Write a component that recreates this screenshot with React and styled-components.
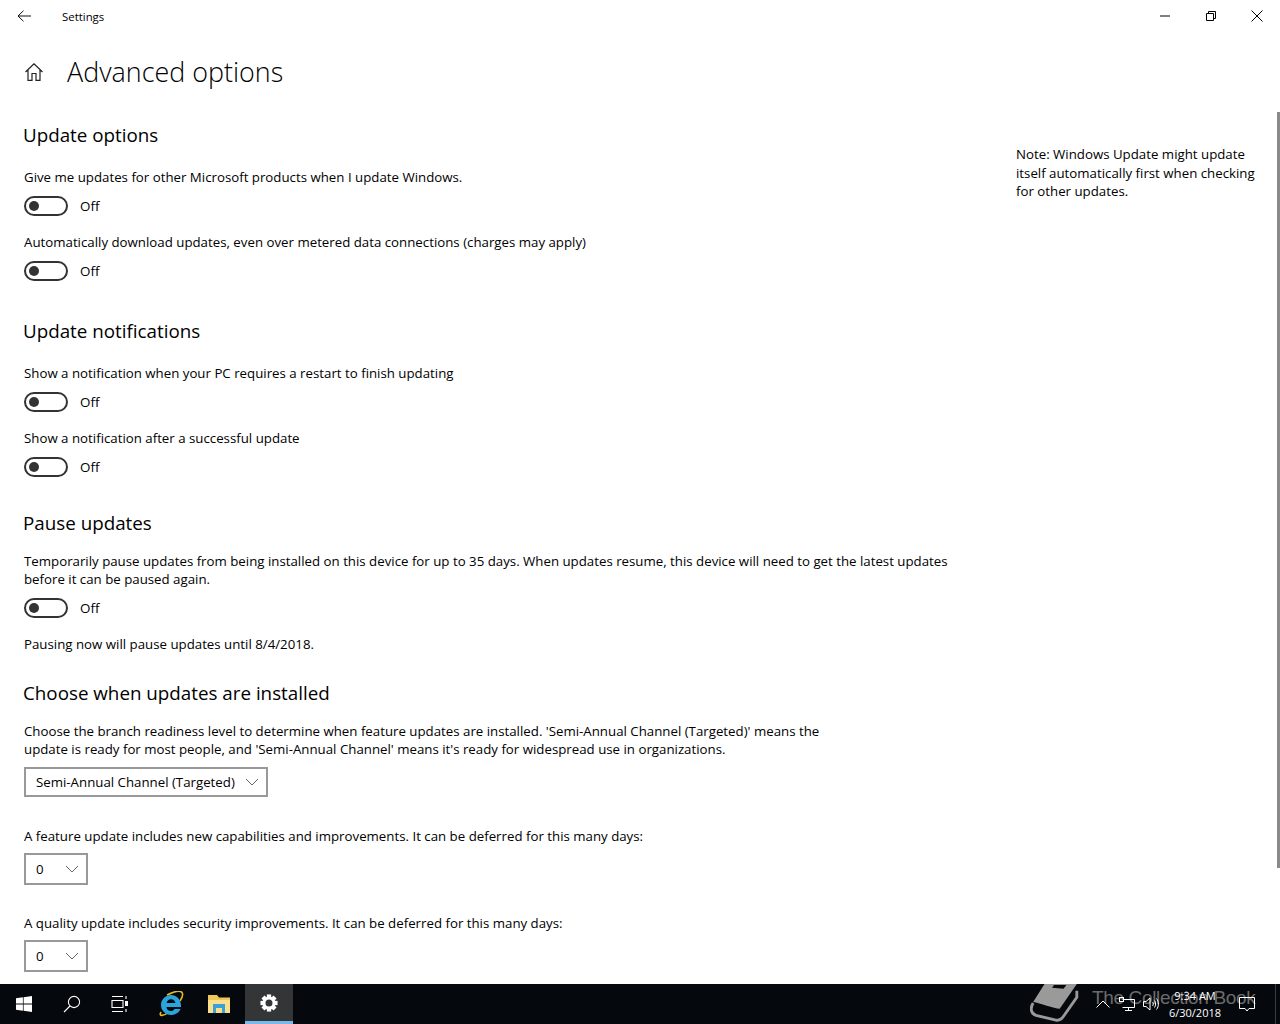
import React from 'react'
import styled, { createGlobalStyle } from 'styled-components'

const Global = createGlobalStyle`
  html, body { margin: 0; padding: 0; background: #fff; }
  body { font-family: "Open Sans", "Liberation Sans", sans-serif; color: #000; }
`

const Page = styled.div`
  position: relative;
  width: 1280px;
  height: 1024px;
  overflow: hidden;
  display: flex;
  flex-direction: column;
`

const TitleBar = styled.header`
  height: 32px;
  flex: none;
  display: flex;
  align-items: center;
`

const BackButton = styled.div`
  width: 48px;
  height: 32px;
  display: flex;
  align-items: center;
  justify-content: center;
`

const AppName = styled.div`
  margin-left: 14px;
  font-size: 11.4px;
  flex: 1;
`

const WindowButton = styled.div`
  width: 46px;
  height: 32px;
  display: flex;
  align-items: center;
  justify-content: center;
`

const Main = styled.main`
  flex: 1;
  display: flex;
  min-height: 0;
  overflow: hidden;
`

const Content = styled.div`
  width: 1016px;
  flex: none;
  padding: 20px 0 0 24px;
  box-sizing: border-box;
`

const TitleRow = styled.div`
  height: 40px;
  display: flex;
  align-items: center;
  gap: 24px;
`

const HomeIcon = styled.svg`
  width: 18px;
  height: 18px;
  margin-left: 1px;
  flex: none;
`

const Title = styled.h1`
  margin: 0;
  font-size: 26.9px;
  font-weight: 300;
  line-height: 40px;
`

const Heading = styled.h2`
  margin: ${p => p.$top}px 0 0 -1px;
  font-size: 18.8px;
  font-weight: 400;
  line-height: 28px;
`

const Label = styled.p`
  margin: ${p => p.$top}px 0 0;
  font-size: 13.28px;
  line-height: 18px;
  max-width: ${p => p.$max || 940}px;
`

const ToggleRow = styled.div`
  margin-top: 10px;
  height: 20px;
  display: flex;
  align-items: center;
  gap: 12px;
  font-size: 13.4px;
`

const Toggle = styled.div`
  width: 44px;
  height: 20px;
  box-sizing: border-box;
  border: 2px solid #333;
  border-radius: 10px;
  display: flex;
  align-items: center;
  padding-left: 3px;

  &::before {
    content: '';
    width: 10px;
    height: 10px;
    border-radius: 50%;
    background: #333;
  }
`

const Select = styled.div`
  margin-top: ${p => p.$top}px;
  width: ${p => p.$width}px;
  height: ${p => p.$height}px;
  box-sizing: border-box;
  border: 2px solid #999;
  display: flex;
  align-items: center;
  justify-content: space-between;
  padding: 0 6px 0 10px;
  font-size: 13.28px;
`

const Note = styled.aside`
  margin-top: 113px;
  width: 244px;
  font-size: 13.28px;
  line-height: 18.5px;
`

const ScrollThumb = styled.div`
  position: absolute;
  right: 0;
  top: 112px;
  width: 3px;
  height: 756px;
  background: #8a8a8a;
`

const Taskbar = styled.footer`
  position: relative;
  height: 40px;
  flex: none;
  background: #05080d;
  display: flex;
  color: #fff;
`

const TaskButton = styled.div`
  width: 48px;
  height: 40px;
  margin-left: ${p => p.$left || 0}px;
  box-sizing: border-box;
  display: flex;
  align-items: center;
  justify-content: center;
  background: ${p => (p.$active ? '#333537' : 'transparent')};
  border-bottom: ${p => (p.$active ? '3px solid #76b9ed' : 'none')};
`

const Watermark = styled.div`
  position: absolute;
  left: 1030px;
  top: 0;
  display: flex;
  gap: 13px;
  color: #6b6b6b;
  font-family: "Liberation Sans", sans-serif;
  font-size: 19px;
  letter-spacing: -0.35px;
  line-height: 28px;
  white-space: nowrap;
`

const Tray = styled.div`
  position: relative;
  margin: 0 4px 0 auto;
  display: flex;
  align-items: center;
  padding-right: 14px;
  border-right: 1px solid #3a3d40;
`

const TrayIcon = styled.div`
  width: 24px;
  height: 40px;
  display: flex;
  align-items: center;
  justify-content: center;
`

const Clock = styled.div`
  width: 64px;
  text-align: center;
  font-size: 11px;
  line-height: 17px;
`

const ActionButton = styled.div`
  width: 28px;
  margin-left: 6px;
  display: flex;
  justify-content: center;
`

const Switch = () => (
  <ToggleRow>
    <Toggle />
    Off
  </ToggleRow>
)

const Chevron = () => (
  <svg width="16" height="10" viewBox="0 0 16 10">
    <path d="M2 2 L8 8 L14 2" fill="none" stroke="#666" strokeWidth="1" />
  </svg>
)

export default function App() {
  return (
    <Page>
      <Global />
      <TitleBar>
        <BackButton>
          <svg width="14" height="12" viewBox="0 0 14 12">
            <path d="M6.5 .7 L1 6 L6.5 11.3 M1 6 H14" fill="none" stroke="#111" strokeWidth="1" />
          </svg>
        </BackButton>
        <AppName>Settings</AppName>
        <WindowButton>
          <svg width="10" height="2" viewBox="0 0 10 2"><path d="M0 1 H10" stroke="#000" /></svg>
        </WindowButton>
        <WindowButton>
          <svg width="10" height="10" viewBox="0 0 10 10">
            <path d="M.5 2.5 H7.5 V9.5 H.5 Z M2.5 2.5 V.5 H9.5 V7.5 H7.5" fill="none" stroke="#000" />
          </svg>
        </WindowButton>
        <WindowButton>
          <svg width="12" height="12" viewBox="0 0 12 12">
            <path d="M.5 .5 L11.5 11.5 M11.5 .5 L.5 11.5" stroke="#000" />
          </svg>
        </WindowButton>
      </TitleBar>

      <Main>
        <Content>
          <TitleRow>
            <HomeIcon viewBox="0 0 18 18">
              <path
                d="M.5 9 L9 .8 L17.5 9 M3 7 V17.3 H7 V10.5 H11 V17.3 H15 V7"
                fill="none"
                stroke="#222"
                strokeWidth="1.2"
              />
            </HomeIcon>
            <Title>Advanced options</Title>
          </TitleRow>

          <Heading $top={29}>Update options</Heading>
          <Label $top={19}>Give me updates for other Microsoft products when I update Windows.</Label>
          <Switch />
          <Label $top={17}>Automatically download updates, even over metered data connections (charges may apply)</Label>
          <Switch />

          <Heading $top={36}>Update notifications</Heading>
          <Label $top={19}>Show a notification when your PC requires a restart to finish updating</Label>
          <Switch />
          <Label $top={17}>Show a notification after a successful update</Label>
          <Switch />

          <Heading $top={32}>Pause updates</Heading>
          <Label $top={15}>
            Temporarily pause updates from being installed on this device for up to 35 days. When updates resume, this
            device will need to get the latest updates before it can be paused again.
          </Label>
          <Switch />
          <Label $top={17}>Pausing now will pause updates until 8/4/2018.</Label>

          <Heading $top={26}>Choose when updates are installed</Heading>
          <Label $top={15} $max={810}>
            Choose the branch readiness level to determine when feature updates are installed. 'Semi-Annual Channel
            (Targeted)' means the update is ready for most people, and 'Semi-Annual Channel' means it's ready for
            widespread use in organizations.
          </Label>
          <Select $top={9} $width={244} $height={30}>
            Semi-Annual Channel (Targeted)
            <Chevron />
          </Select>
          <Label $top={30}>A feature update includes new capabilities and improvements. It can be deferred for this many days:</Label>
          <Select $top={8} $width={64} $height={32}>
            0
            <Chevron />
          </Select>
          <Label $top={29}>A quality update includes security improvements. It can be deferred for this many days:</Label>
          <Select $top={8} $width={64} $height={32}>
            0
            <Chevron />
          </Select>
        </Content>
        <Note>Note: Windows Update might update itself automatically first when checking for other updates.</Note>
      </Main>
      <ScrollThumb />

      <Taskbar>
        <TaskButton>
          <svg width="16" height="16" viewBox="0 0 16 16" fill="#fff">
            <path d="M0 2.3 L6.9 1.3 V7.6 H0 Z M7.6 1.2 L16 0 V7.6 H7.6 Z M0 8.4 H6.9 V14.7 L0 13.7 Z M7.6 8.4 H16 V16 L7.6 14.8 Z" />
          </svg>
        </TaskButton>
        <TaskButton>
          <svg width="18" height="18" viewBox="0 0 18 18" fill="none" stroke="#fff" strokeWidth="1.1">
            <circle cx="11" cy="7" r="5.6" />
            <path d="M7 11 L1 17" />
          </svg>
        </TaskButton>
        <TaskButton>
          <svg width="18" height="16" viewBox="0 0 18 16" fill="none" stroke="#fff" strokeWidth="1.1">
            <path d="M1 .5 H12 M1 15.5 H12 M1 4.5 H12 V11.5 H1 Z" />
            <path d="M15 0 V3 M15 13 V16" />
            <rect x="14" y="5" width="3" height="5" fill="#fff" stroke="none" />
          </svg>
        </TaskButton>
        <TaskButton $left={3}>
          <svg width="26" height="26" viewBox="0 0 26 26">
            <path d="M3 21 C0 26 6 25 11 21" fill="none" stroke="#e8b820" strokeWidth="1.6" />
            <path d="M9 4 C15 1 22 -1 24 1.5 C25.5 3.5 24 7 22 10" fill="none" stroke="#e8b820" strokeWidth="1.6" />
            <path
              d="M13 4 C7.5 4 3 8.5 3 14 C3 19.5 7.5 24 13 24 C17.5 24 21 21.5 22.5 18 H16.5 C15.5 19.5 14.5 20 13 20 C10.5 20 8.5 18.5 8.5 16 H23 C23.5 9 19 4 13 4 Z M8.6 12 C9 9.7 10.7 8.2 13 8.2 C15.3 8.2 17.2 9.7 17.4 12 Z"
              fill="#2aa5dc"
              fillRule="evenodd"
            />
          </svg>
        </TaskButton>
        <TaskButton>
          <svg width="22" height="18" viewBox="0 0 22 18">
            <path d="M0 0 H9 L11 2.5 H22 V6 H0 Z" fill="#f2c75a" />
            <rect x="0" y="5" width="22" height="13" fill="#fbe08c" />
            <path d="M5 18 V9 H17 V18 H14 V13 H8 V18 Z" fill="#3aa0dc" />
          </svg>
        </TaskButton>
        <TaskButton $left={2} $active>
          <svg width="18" height="18" viewBox="0 0 20 20">
            <g fill="#fff">
              {[0, 45, 90, 135, 180, 225, 270, 315].map(a => (
                <rect key={a} x="7.6" y="0.5" width="4.8" height="5" transform={`rotate(${a} 10 10)`} />
              ))}
            </g>
            <circle cx="10" cy="10" r="5.6" fill="none" stroke="#fff" strokeWidth="3.4" />
          </svg>
        </TaskButton>

        <Watermark>
          <svg width="49" height="38" viewBox="0 0 51 40">
            <path d="M15 0 H49 L31 26 C25 26 10 20 3 19 Z" fill="#9a9a9a" />
            <path d="M25 1 H38 L35 5 L23 4 Z" fill="#05080d" />
            <path
              d="M3 20 C0 25 0 31 6 33 L27 38 C31 39 33 37 35 34 L49 14 V7"
              fill="none"
              stroke="#9a9a9a"
              strokeWidth="3"
            />
          </svg>
          The Collection Book
        </Watermark>

        <Tray>
          <TrayIcon>
            <svg width="14" height="8" viewBox="0 0 14 8"><path d="M.5 7.5 L7 1 L13.5 7.5" fill="none" stroke="#fff" /></svg>
          </TrayIcon>
          <TrayIcon>
            <svg width="16" height="14" viewBox="0 0 16 14" fill="none" stroke="#fff">
              <path d="M3.5 2.5 H15.5 V10.5 H3.5 M9.5 10.5 V13.5 M6 13.5 H13" />
              <rect x=".5" y=".5" width="4" height="4" />
            </svg>
          </TrayIcon>
          <TrayIcon>
            <svg width="16" height="14" viewBox="0 0 16 14" fill="none" stroke="#fff">
              <path d="M.5 4.5 H3 L7 1 V13 L3 9.5 H.5 Z M9.5 5 C10.5 6 10.5 8 9.5 9 M11.5 3.5 C13 5.5 13 8.5 11.5 10.5 M13.5 1.5 C16 4.5 16 9.5 13.5 12.5" />
            </svg>
          </TrayIcon>
          <Clock>
            <div>9:34 AM</div>
            <div>6/30/2018</div>
          </Clock>
          <ActionButton>
            <svg width="16" height="15" viewBox="0 0 16 15">
              <path d="M.5 .5 H15.5 V11.5 H10 L8 14 L6 11.5 H.5 Z" fill="none" stroke="#fff" />
            </svg>
          </ActionButton>
        </Tray>
      </Taskbar>
    </Page>
  )
}
